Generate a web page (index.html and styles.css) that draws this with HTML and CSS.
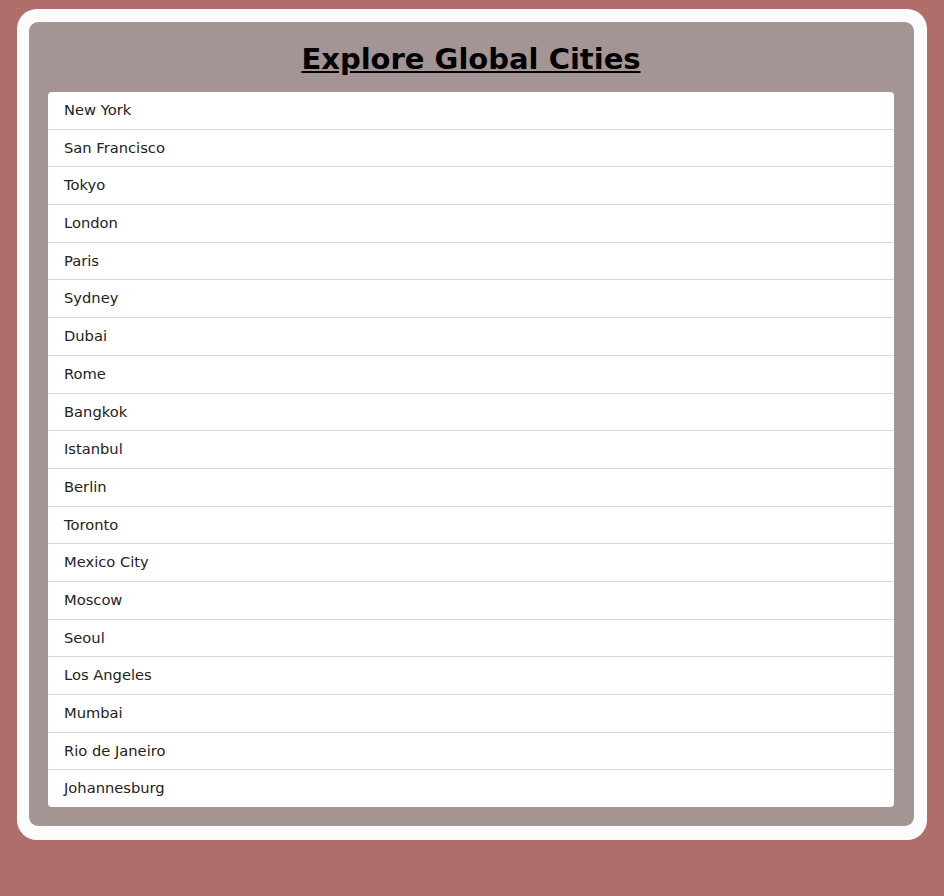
FILE: index.html
```html
<!DOCTYPE html>
<html lang="en">
<head>
    <meta charset="UTF-8">
    <meta name="viewport" content="width=device-width, initial-scale=1.0">
    <title>Explore Global Cities</title>
    <link rel="stylesheet" href="styles.css">
</head>
<body>
    <div class="frame">
        <div class="panel">
            <h1 class="title">Explore Global Cities</h1>
            <ul class="city-list">
                <li>New York</li>
                <li>San Francisco</li>
                <li>Tokyo</li>
                <li>London</li>
                <li>Paris</li>
                <li>Sydney</li>
                <li>Dubai</li>
                <li>Rome</li>
                <li>Bangkok</li>
                <li>Istanbul</li>
                <li>Berlin</li>
                <li>Toronto</li>
                <li>Mexico City</li>
                <li>Moscow</li>
                <li>Seoul</li>
                <li>Los Angeles</li>
                <li>Mumbai</li>
                <li>Rio de Janeiro</li>
                <li>Johannesburg</li>
            </ul>
        </div>
    </div>
</body>
</html>
```

FILE: styles.css
```css
body {
    font-family: 'DejaVu Sans', Verdana, sans-serif;
    background-color: #b06e6b;
    color: #222;
    margin: 0;
    padding: 9px 17px 0 17px;
    min-height: 896px;
    box-sizing: border-box;
}
.frame {
    width: 910px;
    background-color: #fcfcfc;
    border-radius: 20px;
    padding: 13px 13px 14px 12px;
    box-sizing: border-box;
}
.panel {
    background-color: #a59494;
    border-radius: 9px;
    padding: 20px 20px 19px 19px;
}
.title {
    margin: 0 0 16px;
    text-align: center;
    font-size: 29px;
    line-height: 34px;
    font-weight: bold;
    text-decoration: underline;
    color: #000;
}
.city-list {
    list-style: none;
    margin: 0;
    padding: 0;
    background-color: #fff;
    border-radius: 4px;
}
.city-list li {
    padding: 10px 16px;
    font-size: 14.7px;
    line-height: 16.68px;
    border-top: 1px solid #d8d8d8;
}
.city-list li:first-child {
    border-top: none;
}
```
